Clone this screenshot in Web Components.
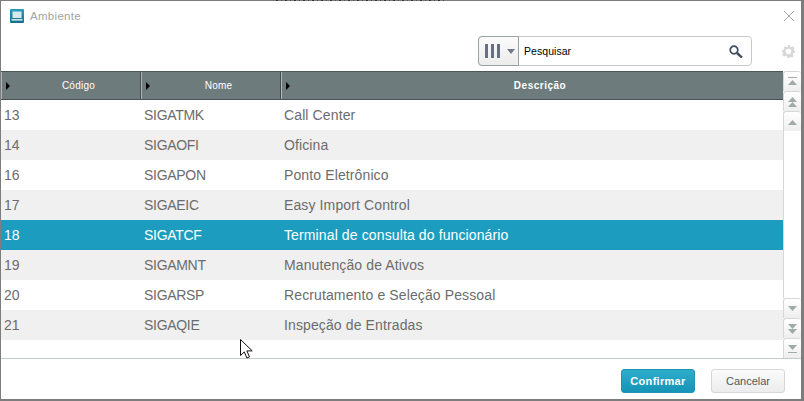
<!DOCTYPE html>
<html>
<head>
<meta charset="utf-8">
<title>Ambiente</title>
<style>
  html, body { margin: 0; height: 100%; background: #fff; overflow: hidden; }
  body { font-family: "Liberation Sans", Arial, sans-serif; }
</style>
</head>
<body>
<env-dialog>
  <dialog-title slot="title">Ambiente</dialog-title>
  <search-bar slot="tools"></search-bar>
  <data-grid slot="grid">
    <grid-row code="13" name="SIGATMK" desc="Call Center"></grid-row>
    <grid-row code="14" name="SIGAOFI" desc="Oficina" alt></grid-row>
    <grid-row code="16" name="SIGAPON" desc="Ponto Eletrônico"></grid-row>
    <grid-row code="17" name="SIGAEIC" desc="Easy Import Control" alt></grid-row>
    <grid-row code="18" name="SIGATCF" desc="Terminal de consulta do funcionário" selected></grid-row>
    <grid-row code="19" name="SIGAMNT" desc="Manutenção de Ativos" alt></grid-row>
    <grid-row code="20" name="SIGARSP" desc="Recrutamento e Seleção Pessoal"></grid-row>
    <grid-row code="21" name="SIGAQIE" desc="Inspeção de Entradas" alt></grid-row>
  </data-grid>
  <ui-button slot="footer" primary>Confirmar</ui-button>
  <ui-button slot="footer">Cancelar</ui-button>
</env-dialog>

<script>
class EnvDialog extends HTMLElement {
  connectedCallback() {
    this.attachShadow({ mode: 'open' });
    this.shadowRoot.innerHTML = `
      <style>
        :host {
          display: flex;
          flex-direction: column;
          box-sizing: border-box;
          position: relative;
          width: 804px;
          height: 401px;
          background: #fff;
          border: solid #7d7d7d;
          border-width: 1px 3px 2px 1px;
        }
        .tools { height: 70px; flex: none; }
        .grid { height: 288px; flex: none; border-bottom: 1px solid #c4c9c9; box-sizing: border-box; }
        footer {
          flex: 1;
          display: flex;
          justify-content: flex-end;
          align-items: flex-start;
          gap: 16px;
          padding: 10px 16px 0 0;
        }
        .cursor { position: absolute; left: 239px; top: 338px; }
        /* text of the page behind the dialog, clipped to one pixel */
        .behind {
          position: absolute;
          left: 275px;
          top: -1px;
          width: 170px;
          height: 1px;
          background: repeating-linear-gradient(90deg, #333 0 2px, #7d7d7d 2px 5px, #5a4a3a 5px 6px, #7d7d7d 6px 9px);
        }
      </style>
      <div class="tools">
        <slot name="title"></slot>
        <slot name="tools"></slot>
      </div>
      <div class="grid"><slot name="grid"></slot></div>
      <footer><slot name="footer"></slot></footer>
      <div class="behind"></div>
      <svg class="cursor" width="13" height="20" viewBox="0 0 13 20">
        <path d="M.5.5v16l3.8-3.6 2.6 6.1 2.6-1.1-2.6-6h5.3z" fill="#fff" stroke="#111" stroke-width="1"/>
      </svg>
    `;
  }
}

class DialogTitle extends HTMLElement {
  connectedCallback() {
    this.attachShadow({ mode: 'open' });
    this.shadowRoot.innerHTML = `
      <style>
        :host {
          display: flex;
          align-items: center;
          height: 30px;
          padding: 0 7px 0 9px;
          color: #a3a3a3;
          font-size: 11.5px;
        }
        .logo { margin-right: 6px; }
        .label { flex: 1; letter-spacing: .3px; }
      </style>
      <svg class="logo" width="14" height="14" viewBox="0 0 14 14">
        <defs>
          <linearGradient id="lg" x1="0" y1="0" x2="0" y2="1">
            <stop offset="0" stop-color="#2a9dc0"/>
            <stop offset="1" stop-color="#146f8c"/>
          </linearGradient>
        </defs>
        <rect width="14" height="14" rx="1" fill="url(#lg)"/>
        <rect x="2.500" y="2.500" width="9" height="6.500" fill="#d9e8ee"/>
        <rect x="1.500" y="10" width="11" height="1.600" fill="#cfe3ea"/>
      </svg>
      <span class="label"><slot></slot></span>
      <svg width="10" height="10" viewBox="0 0 10 10">
        <path d="M0 0l10 10M10 0L0 10" stroke="#a8a8a8" stroke-width="1" fill="none"/>
      </svg>
    `;
  }
}

class SearchBar extends HTMLElement {
  connectedCallback() {
    this.attachShadow({ mode: 'open' });
    this.shadowRoot.innerHTML = `
      <style>
        :host {
          display: flex;
          justify-content: flex-end;
          align-items: center;
          padding: 5px 6px 4px 0;
          box-sizing: border-box;
          height: 39px;
          gap: 30px;
        }
        .box {
          display: flex;
          align-items: stretch;
          width: 274px;
          height: 30px;
          box-sizing: border-box;
          border: 1px solid #c6caca;
          border-radius: 4px;
        }
        .columns {
          display: flex;
          align-items: center;
          gap: 7px;
          width: 41px;
          box-sizing: border-box;
          padding-left: 6px;
          border: 1px solid #9aa2a2;
          border-radius: 4px 0 0 4px;
          margin: -1px 0 -1px -1px;
          background: linear-gradient(#fbfbfb, #ececec);
        }
        .text {
          flex: 1;
          padding-left: 5px;
          line-height: 28px;
          font-size: 10.500px;
          letter-spacing: .05px;
          color: #000;
        }
        .find { align-self: center; margin-right: 8px; }
      </style>
      <div class="box">
        <div class="columns">
          <svg width="15" height="14" viewBox="0 0 15 14">
            <path d="M0 0h3v14H0zM6 0h3v14H6zM12 0h3v14h-3z" fill="#667082"/>
          </svg>
          <svg width="8" height="5" viewBox="0 0 8 5"><path d="M0 0h8L4 5z" fill="#6f7a8a"/></svg>
        </div>
        <div class="text">Pesquisar</div>
        <svg class="find" width="14" height="13" viewBox="0 0 14 13">
          <circle cx="5" cy="5" r="3.800" fill="none" stroke="#3f4c5c" stroke-width="1.700"/>
          <path d="M8 8l5 4.600" stroke="#3f4c5c" stroke-width="2.400"/>
        </svg>
      </div>
      <svg width="13" height="13" viewBox="0 0 15 15">
        <path d="M6 0h3l.4 2.100 1.500.6L12.700 1.500l2 2-1.200 1.800.6 1.500L15 6v3l-2.100.4-.6 1.500 1.200 1.800-2 2-1.800-1.200-1.500.6L9 15H6l-.4-2.100-1.500-.6-1.800 1.200-2-2 1.200-1.800-.6-1.500L0 9V6l2.100-.4.6-1.500L1.500 3.500l2-2 1.800 1.200 1.500-.6z" fill="#d8d8d8"/>
        <circle cx="7.500" cy="7.500" r="3.200" fill="#fff"/>
      </svg>
    `;
  }
}

class DataGrid extends HTMLElement {
  connectedCallback() {
    this.attachShadow({ mode: 'open' });
    const heads = [['Código', ''], ['Nome', ''], ['Descrição', 'wide']];
    this.shadowRoot.innerHTML = `
      <style>
        :host { display: flex; height: 100%; }
        .main { flex: 1; min-width: 0; }
        .head {
          display: grid;
          grid-template-columns: 140px 140px 1fr;
          height: 29px;
          box-sizing: border-box;
          background: #6e7b7d;
          border-top: 1px solid #4f5759;
          border-bottom: 1px solid #4a5254;
          color: #fff;
          font-size: 10px;
          letter-spacing: .25px;
        }
        .cell {
          display: flex;
          align-items: center;
          justify-content: center;
          padding-left: 16px;
          position: relative;
          border-right: 1px solid #444b4d;
          box-shadow: inset 1px 0 0 #aeb6b7;
        }
        .cell:last-child { border-right: 0; }
        .cell::before {
          content: '';
          position: absolute;
          left: 5px;
          top: 10px;
          border-left: 4px solid #000;
          border-top: 4px solid transparent;
          border-bottom: 4px solid transparent;
        }
        .wide { font-weight: bold; letter-spacing: .5px; }
      </style>
      <div class="main">
        <div class="head">
          ${heads.map(h => `<div class="cell ${h[1]}">${h[0]}</div>`).join('')}
        </div>
        <slot></slot>
      </div>
      <grid-scrollbar></grid-scrollbar>
    `;
  }
}

class GridRow extends HTMLElement {
  connectedCallback() {
    this.attachShadow({ mode: 'open' });
    this.shadowRoot.innerHTML = `
      <style>
        :host {
          display: grid;
          grid-template-columns: 140px 140px 1fr;
          height: 30px;
          align-items: center;
          padding-left: 3px;
          font-size: 14px;
          color: #6c6c6c;
          background: #fff;
        }
        :host([alt]) { background: #f0f0f0; }
        :host([selected]) { background: #1c9dbf; color: #fff; }
        span { white-space: nowrap; }
        .name { letter-spacing: -.3px; }
        .desc { letter-spacing: .12px; }
      </style>
      <span>${this.getAttribute('code')}</span>
      <span class="name">${this.getAttribute('name')}</span>
      <span class="desc">${this.getAttribute('desc')}</span>
    `;
  }
}

class GridScrollbar extends HTMLElement {
  connectedCallback() {
    this.attachShadow({ mode: 'open' });
    const up = 'M4.500 0L9 5H0z';
    const down = 'M0 0h9L4.500 5z';
    const btn = (body) => `<div class="btn"><svg width="9" height="14" viewBox="0 0 9 14">${body}</svg></div>`;
    this.shadowRoot.innerHTML = `
      <style>
        :host {
          display: flex;
          flex-direction: column;
          width: 18px;
          flex: none;
          height: 287px;
          box-sizing: border-box;
          background: #fff;
        }
        .btn {
          height: 20px;
          display: flex;
          align-items: center;
          justify-content: center;
          box-sizing: border-box;
          border: 1px solid #d5d8d8;
          border-width: 1px 0 0 1px;
          border-radius: 3px 3px 0 0;
          background: linear-gradient(#fff, #eeeeee);
        }
        .gap { flex: 1; border-left: 1px solid #d5d8d8; }
        path, rect { fill: #a2a9a9; }
      </style>
      ${btn(`<rect y="2" width="9" height="1"/><path transform="translate(0 5)" d="${up}"/>`)}
      ${btn(`<path transform="translate(0 2)" d="${up}"/><path transform="translate(0 7)" d="${up}"/>`)}
      ${btn(`<path transform="translate(0 5)" d="${up}"/>`)}
      <div class="gap"></div>
      ${btn(`<path transform="translate(0 4)" d="${down}"/>`)}
      ${btn(`<path transform="translate(0 2)" d="${down}"/><path transform="translate(0 7)" d="${down}"/>`)}
      ${btn(`<path transform="translate(0 3)" d="${down}"/><rect y="10" width="9" height="1"/>`)}
    `;
  }
}

class UiButton extends HTMLElement {
  connectedCallback() {
    this.attachShadow({ mode: 'open' });
    this.shadowRoot.innerHTML = `
      <style>
        :host {
          display: flex;
          align-items: center;
          justify-content: center;
          box-sizing: border-box;
          width: 74px;
          height: 24px;
          border: 1px solid #d4d8d8;
          border-radius: 3px;
          font-size: 11px;
          color: #4f5a61;
          background: linear-gradient(#fbfbfb, #ececec);
        }
        :host([primary]) {
          color: #fff;
          font-weight: bold;
          letter-spacing: .3px;
          border-color: #1b95b6;
          background: linear-gradient(#2eaccb, #1694b7);
        }
      </style>
      <slot></slot>
    `;
  }
}

customElements.define('env-dialog', EnvDialog);
customElements.define('dialog-title', DialogTitle);
customElements.define('search-bar', SearchBar);
customElements.define('data-grid', DataGrid);
customElements.define('grid-row', GridRow);
customElements.define('grid-scrollbar', GridScrollbar);
customElements.define('ui-button', UiButton);
</script>
</body>
</html>
